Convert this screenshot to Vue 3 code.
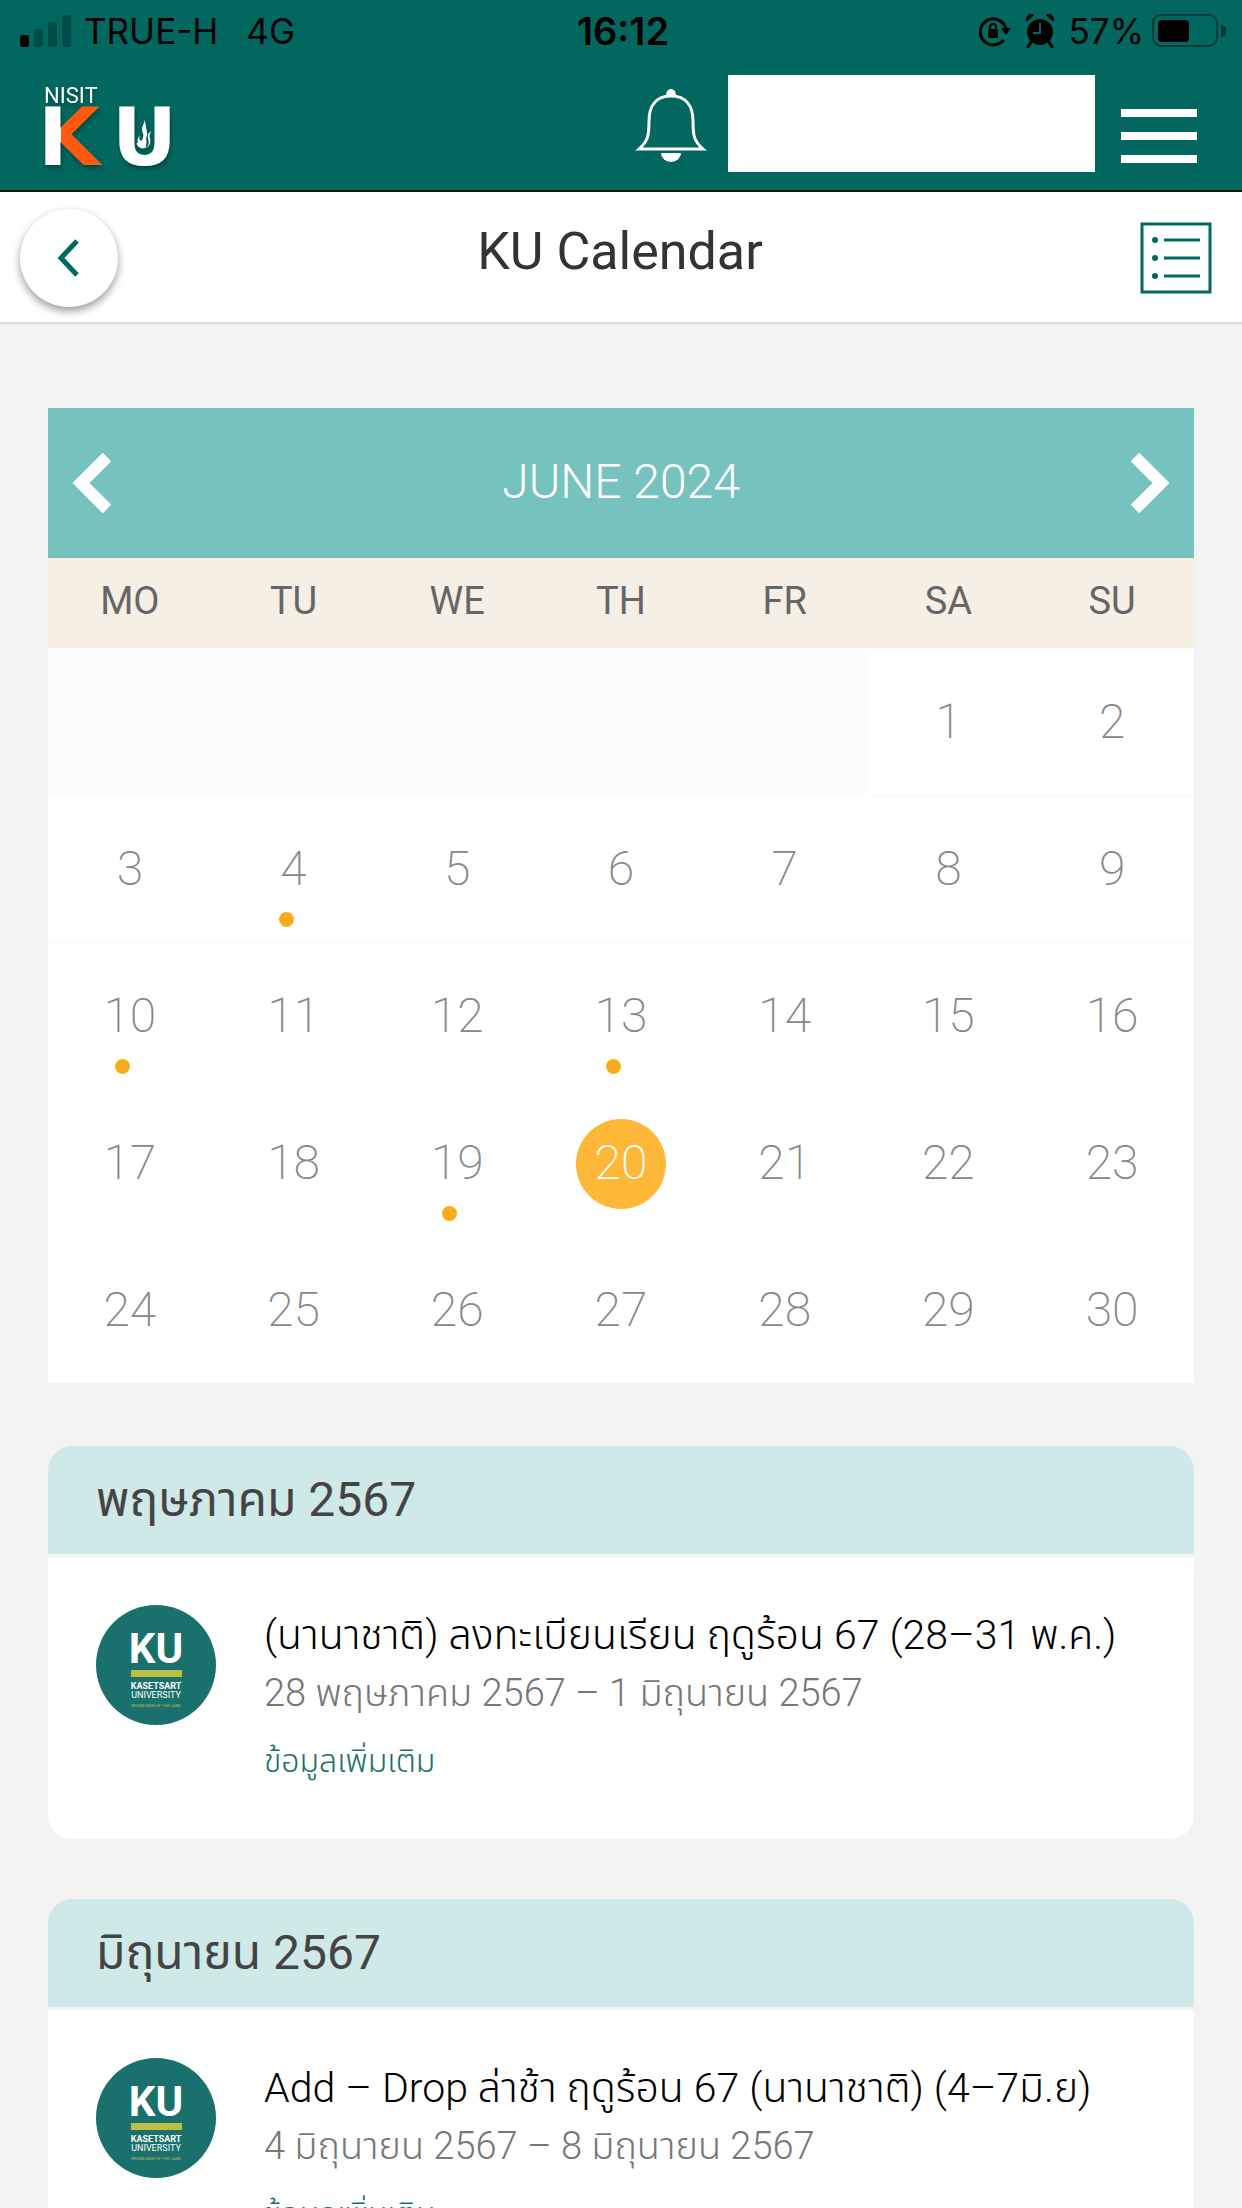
<script setup>
const weekdays = ['MO', 'TU', 'WE', 'TH', 'FR', 'SA', 'SU']
const eventDays = [4, 10, 13, 19]
const today = 20
const leadingBlanks = 5

const cells = [
  ...Array(leadingBlanks).fill(null),
  ...Array.from({ length: 30 }, (_, i) => i + 1)
]
const weeks = Array.from({ length: 5 }, (_, i) => cells.slice(i * 7, i * 7 + 7))

const months = [
  {
    name: 'พฤษภาคม 2567',
    title: '(นานาชาติ) ลงทะเบียนเรียน ฤดูร้อน 67 (28–31 พ.ค.)',
    date: '28 พฤษภาคม 2567 – 1 มิถุนายน 2567'
  },
  {
    name: 'มิถุนายน 2567',
    title: 'Add – Drop ล่าช้า ฤดูร้อน 67 (นานาชาติ) (4–7มิ.ย)',
    date: '4 มิถุนายน 2567 – 8 มิถุนายน 2567'
  }
]
</script>

<template>
  <div class="app">
    <header class="top">
      <div class="status">
        <div class="status-side">
          <svg class="signal" width="52" height="32" viewBox="0 0 52 32" aria-hidden="true">
            <rect x="0" y="20" width="9" height="12" rx="2" />
            <g fill-opacity=".25">
              <rect x="14" y="14" width="9" height="18" rx="2" />
              <rect x="28" y="7" width="9" height="25" rx="2" />
              <rect x="42" y="0" width="9" height="32" rx="2" />
            </g>
          </svg>
          <span>TRUE-H</span>
          <span class="network">4G</span>
        </div>
        <time class="clock">16:12</time>
        <div class="status-side end">
          <svg width="32" height="32" viewBox="0 0 32 32" aria-hidden="true">
            <path d="M24.5 25A13 13 0 1 1 27 14" fill="none" stroke="#000" stroke-width="3" />
            <path d="M22 13h10l-5 7z" />
            <rect x="9" y="14" width="10" height="9" rx="1" />
            <path d="M11 15v-3a3 3 0 0 1 6 0v3" fill="none" stroke="#000" stroke-width="2" />
          </svg>
          <svg class="alarm" width="30" height="34" viewBox="0 0 30 34" aria-hidden="true">
            <circle cx="15" cy="18" r="13" />
            <path d="M2 8a5 5 0 0 1 7-7zM28 8a5 5 0 0 0-7-7z" />
            <path d="M6 28l-3 5M24 28l3 5" stroke="#000" stroke-width="3" stroke-linecap="round" />
            <path d="M15 9v10H8" fill="none" stroke="#01675f" stroke-width="2" />
          </svg>
          <span>57%</span>
          <svg width="74" height="34" viewBox="0 0 74 34" aria-hidden="true">
            <rect x="1" y="1" width="64" height="31" rx="8" fill="none" stroke="#000" stroke-opacity=".4" stroke-width="2" />
            <rect x="6" y="6" width="31" height="22" rx="4" />
            <path d="M69 11a6 6 0 0 1 0 12z" fill-opacity=".45" />
          </svg>
        </div>
      </div>
      <div class="brand-bar">
        <a class="logo" href="#" aria-label="NISIT KU">
          <svg width="160" height="106" viewBox="0 0 160 106">
            <defs>
              <linearGradient id="split" gradientUnits="userSpaceOnUse" x1="0" x2="100" y1="0" y2="0">
                <stop offset=".25" stop-color="#fff" />
                <stop offset=".25" stop-color="#ff5a0f" />
              </linearGradient>
            </defs>
            <text x="8" y="21" class="logo-small">NISIT</text>
            <text x="2" y="83" class="logo-big" fill="url(#split)">K</text>
            <text x="76" y="83" class="logo-big" fill="#fff">U</text>
            <path transform="translate(36 13) scale(.68 .75)" fill="#fff" d="M107 33c-1 6-4 8-4 13 0 4 2 5 2 8l-2 7c-4 0-5-3-3-7-4 3-4 6-3 9l-2 1c1 5 6 8 11 7 7-1 10-6 9-12-1-4-2-6 2-11-6 3-6 7-5 11 2 6 0 10-4 11 2-4 2-8 1-13 2-3 2-5 1-9z" />
          </svg>
        </a>
        <div class="brand-tools">
          <button class="plain bell" aria-label="Notifications">
            <svg width="74" height="74" viewBox="0 0 74 74" fill="none" stroke="#fff" stroke-width="3">
              <path d="M37 7C22 7 15 17 15 32C15 47 14 52 5 60H69C60 52 59 47 59 32C59 17 52 7 37 7Z" />
              <path d="M33 6a4 5 0 0 1 8 0z" fill="#fff" stroke-width="2" />
              <path d="M27 64h20a10 9 0 0 1-20 0z" fill="#fff" stroke="none" />
            </svg>
          </button>
          <div class="profile"></div>
          <button class="plain menu" aria-label="Menu"><i></i><i></i><i></i></button>
        </div>
      </div>
    </header>

    <nav class="title-bar">
      <button class="back" aria-label="Back">
        <svg width="24" height="40" viewBox="0 0 24 40"><path d="M20 3L4 20L20 37" fill="none" stroke="#006960" stroke-width="5" /></svg>
      </button>
      <h1>KU Calendar</h1>
      <button class="plain list" aria-label="List view">
        <svg width="72" height="72" viewBox="0 0 72 72" fill="none" stroke="#006960" stroke-width="3">
          <path d="M2 2H70V70H2Z" />
          <path d="M24 18H60M24 36H60M24 54H60" />
          <g fill="#006960" stroke="none"><circle cx="15" cy="18" r="3" /><circle cx="15" cy="36" r="3" /><circle cx="15" cy="54" r="3" /></g>
        </svg>
      </button>
    </nav>

    <main>
      <section class="calendar">
        <div class="month">
          <button class="plain" aria-label="Previous month">
            <svg width="40" height="60" viewBox="0 0 40 60"><path d="M34 4L8 30L34 56" fill="none" stroke="#fff" stroke-width="12" /></svg>
          </button>
          <h2>JUNE 2024</h2>
          <button class="plain" aria-label="Next month">
            <svg width="40" height="60" viewBox="0 0 40 60"><path d="M6 4L32 30L6 56" fill="none" stroke="#fff" stroke-width="12" /></svg>
          </button>
        </div>
        <table>
          <thead>
            <tr><th v-for="d in weekdays" :key="d" scope="col">{{ d }}</th></tr>
          </thead>
          <tbody>
            <tr v-for="(week, w) in weeks" :key="w">
              <td v-for="(day, i) in week" :key="i" :class="{ blank: !day, event: eventDays.includes(day) }">
                <span v-if="day" class="day" :class="{ today: day === today }">{{ day }}</span>
              </td>
            </tr>
          </tbody>
        </table>
      </section>

      <div class="cards">
        <section v-for="m in months" :key="m.name" class="card">
          <h2>{{ m.name }}</h2>
          <article>
            <svg class="avatar" width="120" height="120" viewBox="0 0 120 120" role="img" aria-label="Kasetsart University">
              <circle cx="60" cy="60" r="60" fill="#1a706c" />
              <g text-anchor="middle" fill="#fff">
                <text x="60" y="58" class="seal-ku">KU</text>
                <rect x="35" y="65" width="51" height="7" fill="#bdbf45" />
                <text x="60" y="84" class="seal-name">KASETSART</text>
                <text x="60" y="93" class="seal-sub">UNIVERSITY</text>
                <text x="60" y="102" class="seal-motto">KNOWLEDGE OF THE LAND</text>
              </g>
            </svg>
            <div class="info">
              <h3>{{ m.title }}</h3>
              <p>{{ m.date }}</p>
              <a href="#">ข้อมูลเพิ่มเติม</a>
            </div>
          </article>
        </section>
      </div>
    </main>
  </div>
</template>

<style>
body {
  margin: 0;
}
</style>

<style scoped>
* {
  box-sizing: border-box;
}

.app {
  display: flex;
  flex-direction: column;
  height: 100vh;
  background: #f3f3f3;
  font-family: Roboto, "Noto Sans Thai", sans-serif;
}

h1, h2, h3, p {
  margin: 0;
  font-weight: 300;
}

button {
  padding: 0;
  border: 0;
  cursor: pointer;
}

svg {
  display: block;
  flex: none;
}

.plain {
  background: none;
}

.top {
  flex: none;
  background: #01675f;
  border-bottom: 2px solid #111;
}

.status {
  display: grid;
  grid-template-columns: 1fr auto 1fr;
  align-items: center;
  height: 62px;
  padding: 0 16px 0 20px;
  font: 400 35px/60px Inter, sans-serif;
  color: #000;
}

.status-side {
  display: flex;
  align-items: center;
}

.status-side.end {
  justify-content: flex-end;
  gap: 8px;
}

.signal {
  margin-right: 12px;
}

.network {
  margin-left: 28px;
}

.alarm {
  margin: 0 6px;
}

.clock {
  font-size: 38px;
  font-weight: 600;
}

.brand-bar {
  display: flex;
  justify-content: space-between;
  height: 128px;
  padding: 0 45px 0 36px;
}

.logo {
  margin-top: 20px;
  filter: drop-shadow(1px 3px 2px rgba(0, 0, 0, .3));
}

.logo-small {
  font: 400 22px Roboto, sans-serif;
  fill: #fff;
}

.logo-big {
  font: 700 80px "DejaVu Sans", sans-serif;
}

.brand-tools {
  display: flex;
  align-items: flex-start;
  padding-top: 13px;
}

.bell {
  margin: 14px 20px 0 0;
}

.profile {
  width: 367px;
  height: 97px;
  background: #fff;
}

.menu {
  display: flex;
  flex-direction: column;
  gap: 15px;
  margin: 34px 0 0 26px;
}

.menu i {
  width: 76px;
  height: 8px;
  background: #fff;
}

.title-bar {
  display: grid;
  grid-template-columns: 1fr auto 1fr;
  align-items: center;
  flex: none;
  height: 132px;
  padding: 2px 30px 0 20px;
  background: #fff;
  border-bottom: 2px solid #ddd;
}

.back {
  display: grid;
  place-items: center;
  width: 98px;
  height: 98px;
  border-radius: 50%;
  background: #fff;
  box-shadow: 0 4px 8px rgba(0, 0, 0, .4);
}

.title-bar h1 {
  padding: 0 0 12px 8px;
  font-size: 52px;
  font-weight: 400;
  line-height: 64px;
  color: #333;
}

.list {
  justify-self: end;
}

main {
  flex: 1;
  min-height: 0;
  overflow-y: auto;
  scrollbar-width: none;
  padding: 84px 48px 0;
}

.month {
  display: flex;
  align-items: center;
  justify-content: space-between;
  height: 150px;
  padding: 0 25px;
  background: #76c2be;
}

.month h2 {
  padding-bottom: 4px;
  font-size: 48px;
  color: #fff;
}

table {
  width: 100%;
  table-layout: fixed;
  border-spacing: 0;
  background: #fff;
}

th {
  height: 90px;
  padding: 0 0 4px;
  background: #f6efe3;
  font-size: 38px;
  font-weight: 400;
  color: #666;
}

td {
  position: relative;
  height: 147px;
  padding: 0;
  border-top: 3px solid #fcfcfc;
  text-align: center;
  font-size: 48px;
  font-weight: 200;
  color: #888;
}

.blank {
  background: #fcfcfc;
}

.day {
  display: grid;
  place-items: center;
  width: 90px;
  height: 90px;
  margin: 0 auto;
  padding-bottom: 4px;
  border-radius: 50%;
}

.today {
  background: #feb737;
  color: #fff;
}

.event::after {
  content: "";
  position: absolute;
  right: 50%;
  bottom: 15px;
  width: 15px;
  height: 15px;
  border-radius: 50%;
  background: #faab1b;
}

.cards {
  display: grid;
  gap: 60px;
  padding-top: 63px;
}

.card {
  border-radius: 24px;
  overflow: hidden;
  background: #fff;
}

.card h2 {
  height: 111px;
  padding-left: 48px;
  background: #cfe9e8;
  border-bottom: 3px solid #f3f3f3;
  font-size: 48px;
  font-weight: 400;
  line-height: 108px;
  color: #444;
}

article {
  display: flex;
  gap: 48px;
  padding: 48px 48px 48px;
}

.seal-ku {
  font: 700 42px Roboto, sans-serif;
}

.seal-name {
  font: 700 9px Roboto, sans-serif;
}

.seal-sub {
  font: 400 9px Roboto, sans-serif;
}

.seal-motto {
  font: 400 4px Roboto, sans-serif;
  fill: #bdbf45;
}

.info h3 {
  font-size: 41px;
  line-height: 60px;
  color: #000;
  white-space: nowrap;
}

.info p {
  font-size: 38px;
  line-height: 56px;
  color: #777;
  white-space: nowrap;
}

.info a {
  display: block;
  margin-top: 12px;
  padding-bottom: 2px;
  font-size: 32px;
  font-weight: 300;
  line-height: 56px;
  color: #1a706c;
  text-decoration: none;
}
</style>
